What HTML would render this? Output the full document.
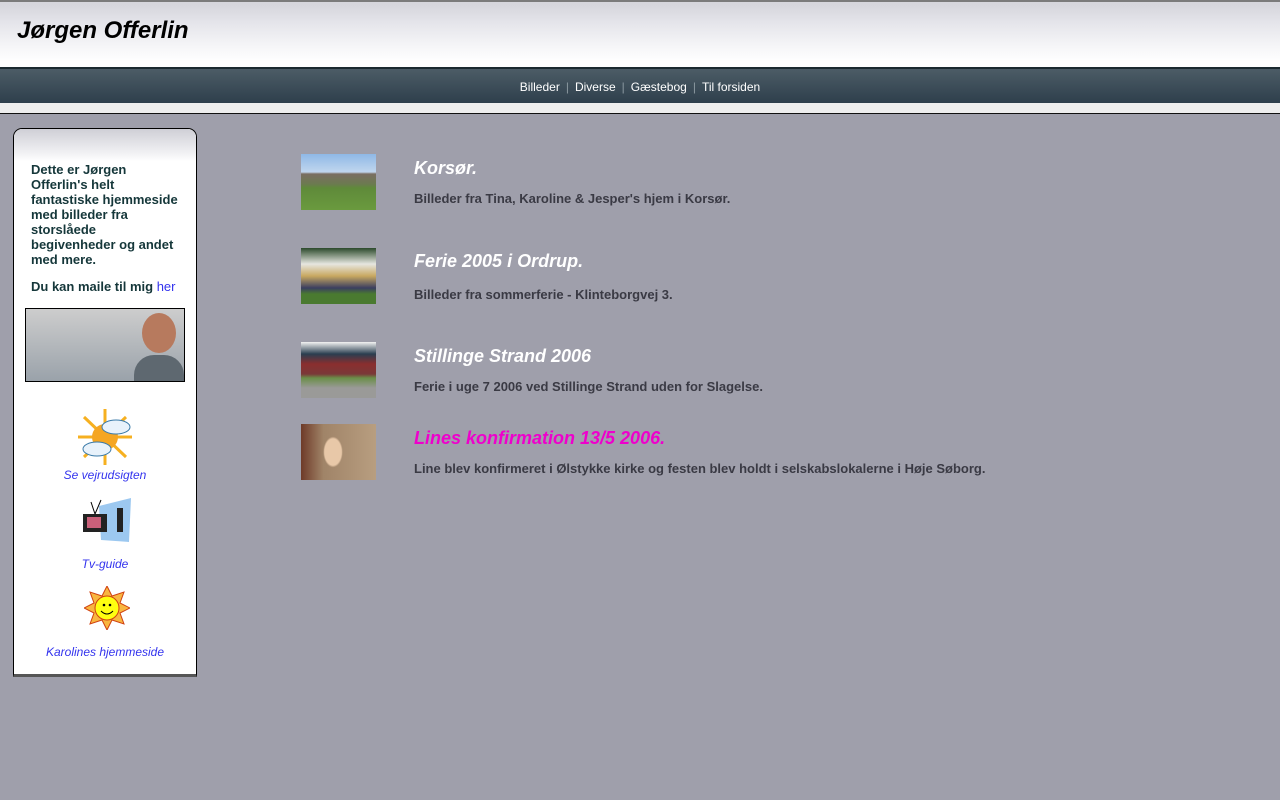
<!DOCTYPE html>
<html><head><meta charset="utf-8"><style>
*{margin:0;padding:0;box-sizing:border-box}
body{width:1280px;height:800px;background:#9f9fab;font-family:"Liberation Sans",Arial,sans-serif;position:relative;overflow:hidden}
.top{position:absolute;left:0;top:0;width:1280px;height:69px;background:linear-gradient(#d6d6dc 3px,#e4e4ea 20px,#f6f6f8 45px,#fff 60px);border-top:2px solid #7b7b7b;border-bottom:2px solid #1c2a30}
.top h1{position:absolute;left:17px;top:15px;font-size:24px;font-style:italic;font-weight:bold;color:#000}
.nav{position:absolute;left:0;top:69px;width:1280px;height:34px;background:linear-gradient(#4c5c66,#2e3f4c);text-align:center;color:#fff;font-size:12px;line-height:36px}
.nav span{color:#8a98a0;margin:0 6px}
.strip{position:absolute;left:0;top:103px;width:1280px;height:11px;background:#eeeeee;border-bottom:1px solid #111}
.side{position:absolute;left:13px;top:128px;width:184px;height:549px;background:#fff;border:1px solid #000;border-radius:9px 9px 0 0;border-bottom:3px solid #555}
.side .g{height:32px;background:linear-gradient(#cfcfd6,#f4f4f6 26px,#fff);border-radius:8px 8px 0 0}
.side p{position:absolute;left:17px;width:148px;font-size:13px;font-weight:bold;color:#15373a;line-height:15px}
a{color:#3333ee;text-decoration:none;font-weight:normal}
.photo{position:absolute;left:11px;top:179px;width:160px;height:74px;border:1px solid #000;background:linear-gradient(#cdcdcd,#9aa2aa)}
.lnk{position:absolute;left:0;width:182px;text-align:center;font-size:12px;font-style:italic;color:#3333ee}
.th{position:absolute;left:301px;width:75px;height:56px}
.t{position:absolute;left:414px;font-size:18px;font-style:italic;font-weight:bold;color:#fff}
.d{position:absolute;left:414px;font-size:13px;font-weight:bold;color:#3a3a44}
</style></head><body>
<div class="top"><h1>Jørgen Offerlin</h1></div>
<div class="nav">Billeder<span>|</span>Diverse<span>|</span>Gæstebog<span>|</span>Til forsiden</div>
<div class="strip"></div>
<div class="side"><div class="g"></div>
<p style="top:33px">Dette er Jørgen Offerlin's helt fantastiske hjemmeside med billeder fra storslåede begivenheder og andet med mere.</p>
<p style="top:150px">Du kan maile til mig <a>her</a></p>
<div class="photo"><div style="position:absolute;right:8px;top:4px;width:34px;height:40px;border-radius:50%;background:#b77a5e"></div><div style="position:absolute;right:0;bottom:0;width:50px;height:26px;background:#5e6870;border-radius:20px 20px 0 0"></div></div>
<svg style="position:absolute;left:64px;top:280px" width="54" height="56"><g stroke="#f6b020" stroke-width="3"><line x1="27" y1="0" x2="27" y2="56"/><line x1="0" y1="28" x2="54" y2="28"/><line x1="6" y1="8" x2="48" y2="48"/><line x1="48" y1="8" x2="6" y2="48"/></g><circle cx="27" cy="28" r="13" fill="#f5a623"/><ellipse cx="38" cy="18" rx="14" ry="7" fill="#e8f2fb" stroke="#3a7aa8"/><ellipse cx="19" cy="40" rx="14" ry="7" fill="#e8f2fb" stroke="#3a7aa8"/></svg>
<div class="lnk" style="top:339px">Se vejrudsigten</div>
<svg style="position:absolute;left:67px;top:367px" width="50" height="46"><polygon points="18,10 50,2 48,46 20,44" fill="#9cc8f0"/><rect x="2" y="18" width="24" height="18" fill="#222"/><rect x="6" y="21" width="14" height="11" fill="#c9607a"/><line x1="14" y1="18" x2="10" y2="6" stroke="#000"/><line x1="14" y1="18" x2="20" y2="4" stroke="#000"/><rect x="36" y="12" width="6" height="24" fill="#222"/></svg>
<div class="lnk" style="top:428px">Tv-guide</div>
<svg style="position:absolute;left:70px;top:457px" width="46" height="44"><polygon points="23,0 28,10 40,6 36,17 46,22 36,27 40,38 28,34 23,44 18,34 6,38 10,27 0,22 10,17 6,6 18,10" fill="#f8b640" stroke="#d04010"/><circle cx="23" cy="22" r="12" fill="#ffff10" stroke="#d04010"/><path d="M17 25 Q23 31 29 25" stroke="#000" fill="none"/><circle cx="20" cy="19" r="1.3"/><circle cx="26" cy="19" r="1.3"/></svg>
<div class="lnk" style="top:516px">Karolines hjemmeside</div>
</div>
<div class="th" style="top:154px;background:linear-gradient(#8fb8e6 0,#c0d6ee 18px,#7a6e62 20px,#6c7a50 30px,#5f8a3a 34px,#6a9a3e)"></div>
<div class="t" style="top:158px">Korsør.</div>
<div class="d" style="top:191px">Billeder fra Tina, Karoline &amp; Jesper's hjem i Korsør.</div>
<div class="th" style="top:248px;background:linear-gradient(#2c4a2c 0,#e6e6e0 16px,#c8a860 28px,#3a3e60 40px,#4a7a30 46px)"></div>
<div class="t" style="top:251px">Ferie 2005 i Ordrup.</div>
<div class="d" style="top:287px">Billeder fra sommerferie - Klinteborgvej 3.</div>
<div class="th" style="top:342px;background:linear-gradient(#f2f2f2 0,#2a3e50 12px,#8a2e2e 22px,#7a3838 32px,#6a8e48 36px,#9a9a98 46px)"></div>
<div class="t" style="top:346px">Stillinge Strand 2006</div>
<div class="d" style="top:379px">Ferie i uge 7 2006 ved Stillinge Strand uden for Slagelse.</div>
<div class="th" style="top:424px;background:radial-gradient(ellipse 14px 22px at 32px 28px,#e8c8a8 60%,transparent 70%),linear-gradient(90deg,#6e3a28,#a08468 30%,#b89e80)"></div>
<div class="t" style="top:428px;color:#ee00cc">Lines konfirmation 13/5 2006.</div>
<div class="d" style="top:461px">Line blev konfirmeret i Ølstykke kirke og festen blev holdt i selskabslokalerne i Høje Søborg.</div>
</body></html>
